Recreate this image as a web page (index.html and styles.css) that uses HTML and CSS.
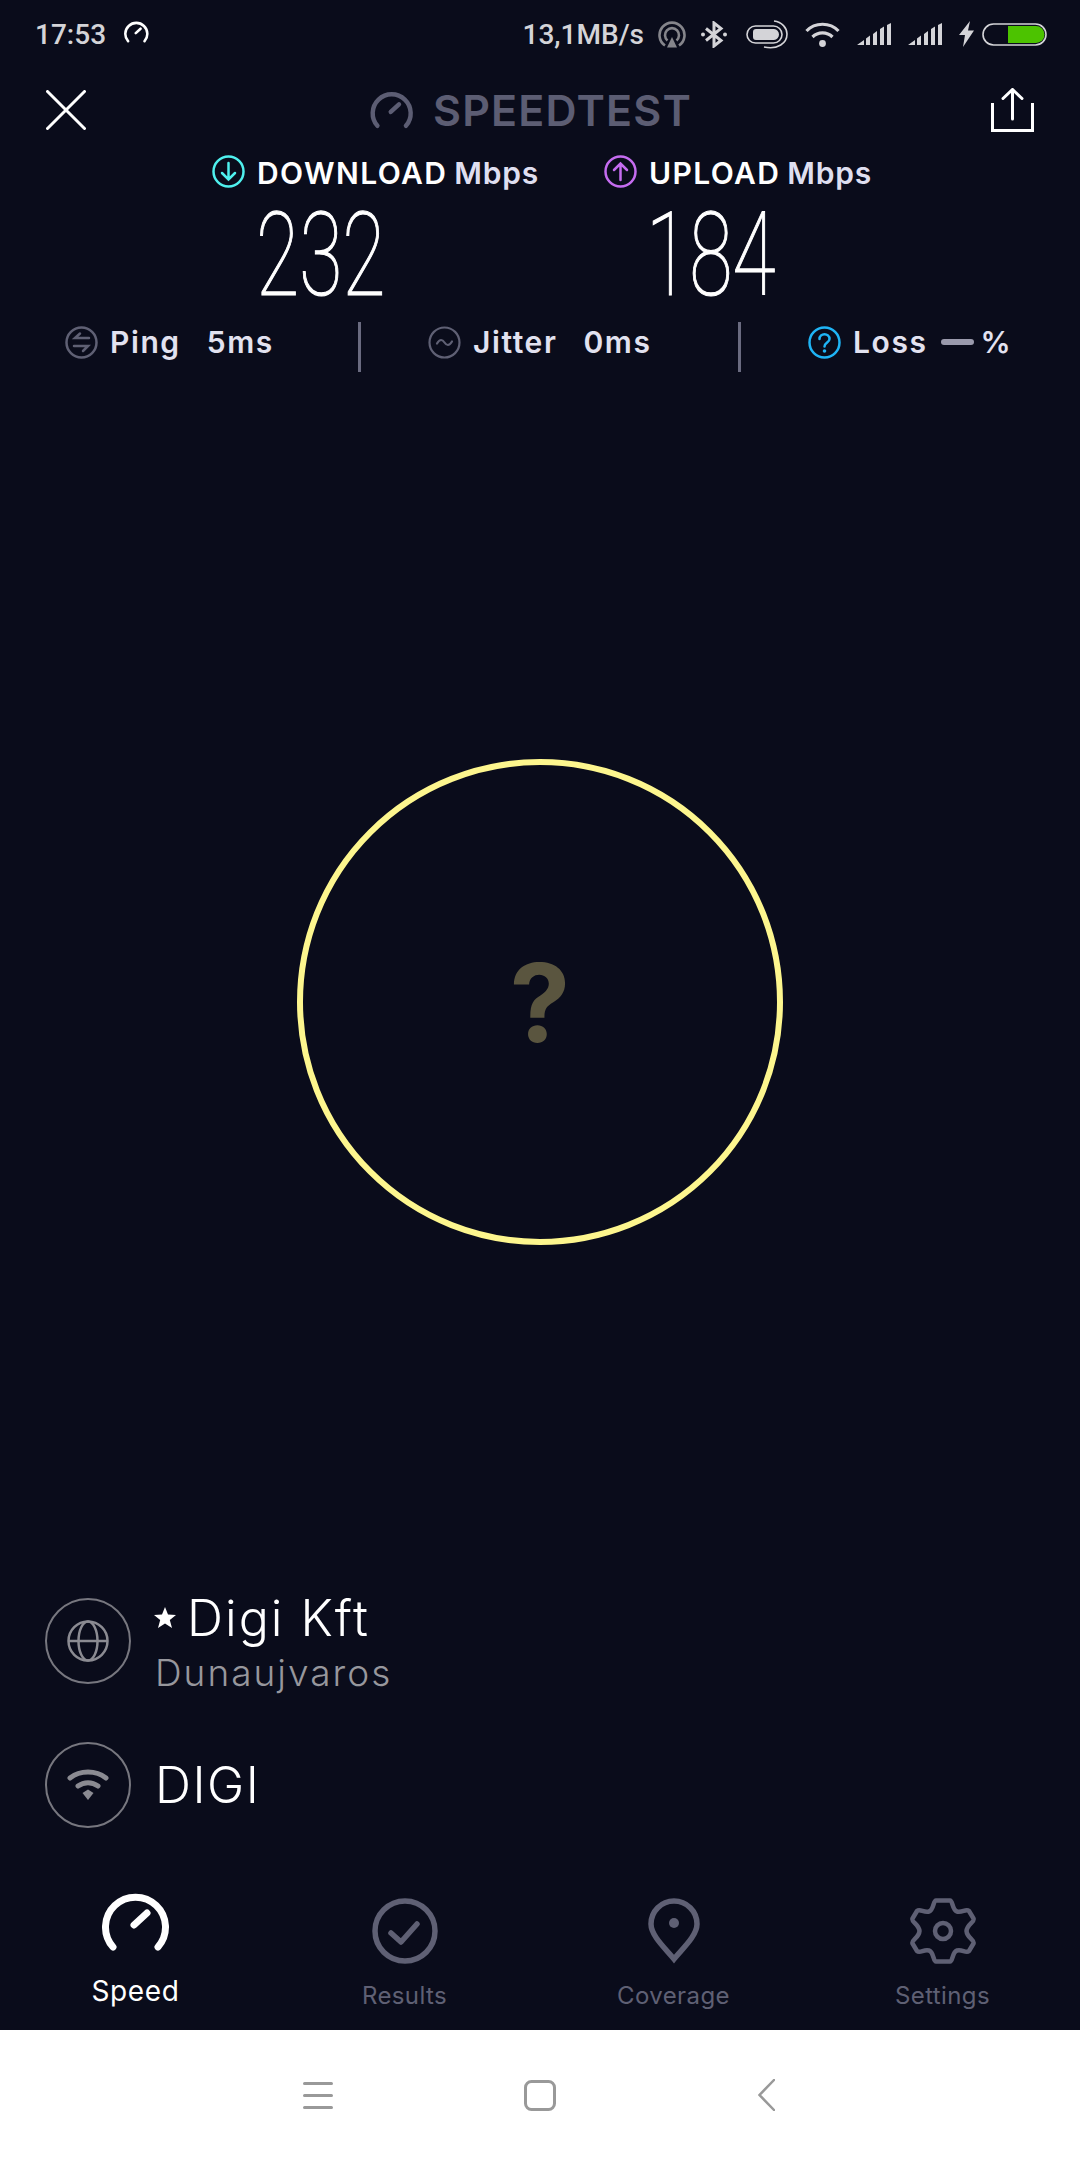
FILE: index.html
```html
<!DOCTYPE html>
<html lang="en">

<head>
  <meta name="viewport" content="width=device-width, initial-scale=1.0">
  <link rel="stylesheet" href="styles.css">
</head>

<body>
  <svg class="defs" width="0" height="0">
    <symbol id="gauge" viewBox="0 0 68 60">
      <path d="M11 55A30 30 0 1 1 56 55M32 33L45 21" fill="none" stroke="currentColor" stroke-width="7" stroke-linecap="round" />
    </symbol>
  </svg>

  <div class="screen">

    <!-- Status bar -->
    <div class="status-bar">
      <span class="clock">17:53</span>
      <svg class="status-gauge" width="25" height="22"><use href="#gauge" /></svg>
      <div class="status-right">
        <span class="net-speed">13,1MB/s</span>
        <svg width="28" height="27" viewBox="0 0 28 27" fill="none" stroke="#85858b" stroke-width="2.600">
          <path d="M7 24.500A12.500 12.500 0 1 1 21 24.500" />
          <path d="M9.500 19.500A7 7 0 1 1 18.500 19.500" />
          <path d="M14 16L19 26.500H9Z" fill="#85858b" stroke="none" />
        </svg>
        <svg class="status-bt" width="26" height="27" viewBox="0 0 26 27" fill="none" stroke="#d4d4d8" stroke-width="3">
          <path d="M5 7.500L20 19.500L13 25V2L20 7.500L5 19.500" />
          <circle cx="2" cy="13.500" r="2" fill="#d4d4d8" stroke="none" />
          <circle cx="24" cy="13.500" r="2" fill="#d4d4d8" stroke="none" />
        </svg>
        <svg width="42" height="29" viewBox="0 0 42 29" fill="none" stroke="#d4d4d8" stroke-width="1.600">
          <rect x="1" y="6" width="35" height="17" rx="8.500" />
          <path d="M7 12a3 3 0 0 1 3-3H28a5.500 5.500 0 0 1 5 5.500a5.500 5.500 0 0 1-5 5.500H10a3 3 0 0 1-3-3Z" fill="#d4d4d8" stroke="none" />
          <path d="M28 1C36 2 41 8 41 14C41 23 32 30 18 27" />
        </svg>
        <svg width="35" height="25" viewBox="0 0 35 25" fill="none" stroke="#d4d4d8" stroke-width="3.200">
          <path d="M1.500 9C10 0 25 0 33.500 9" />
          <path d="M7.500 15C13 9.500 22 9.500 27.500 15" />
          <circle cx="17.500" cy="21.500" r="3.400" fill="#d4d4d8" stroke="none" />
        </svg>
        <svg width="34" height="22" viewBox="0 0 34 22" fill="#d4d4d8">
          <path d="M0 22L7 17V22ZM9 15.500L13 12.500V22H9ZM16 11L20 8V22H16ZM23 6L27 3.500V22H23ZM30 2L34 0V22H30Z" />
        </svg>
        <svg width="34" height="22" viewBox="0 0 34 22" fill="#d4d4d8">
          <path d="M0 22L7 17V22ZM9 15.500L13 12.500V22H9ZM16 11L20 8V22H16ZM23 6L27 3.500V22H23ZM30 2L34 0V22H30Z" />
        </svg>
        <svg width="15" height="26" viewBox="0 0 15 26" fill="#d4d4d8">
          <path d="M11 0L0 14H6L4 26L15 9.500H9Z" />
        </svg>
        <svg class="battery" width="65" height="23" viewBox="0 0 65 23" fill="none">
          <rect x="1" y="1" width="63" height="21" rx="10.500" stroke="#d4d4d8" stroke-width="1.600" />
          <path d="M26 3H54a8.500 8.500 0 0 1 0 17H26Z" fill="#4cc300" />
        </svg>
      </div>
    </div>

    <!-- Header -->
    <div class="header">
      <svg class="close-icon" width="40" height="40" viewBox="0 0 40 40" fill="none" stroke="#fff" stroke-width="3" stroke-linecap="round">
        <path d="M1.500 1.500L38.500 38.500M38.500 1.500L1.500 38.500" />
      </svg>
      <div class="brand">
        <svg class="brand-gauge" width="44" height="38"><use href="#gauge" /></svg>
        <span>SPEEDTEST</span>
      </div>
      <svg class="share-icon" width="43" height="44" viewBox="0 0 43 44" fill="none" stroke="#fff" stroke-width="3">
        <path d="M1.500 15V42.500H41.500V15" />
        <path d="M21.500 31V2M12 10.500L21.500 1.500L31 10.500" stroke-linecap="round" />
      </svg>
    </div>

    <!-- Download / upload -->
    <div class="rates">
      <div class="rate-label">
        <svg width="33" height="33" viewBox="0 0 33 33" fill="none" stroke="#4ff0ee" stroke-width="2.500" stroke-linecap="round">
          <circle cx="16.500" cy="16.500" r="15" />
          <path d="M16.500 8V24M10 18L16.500 24.500L23 18" />
        </svg>
        <span>DOWNLOAD</span><span class="unit">Mbps</span>
      </div>
      <div class="rate-label">
        <svg width="33" height="33" viewBox="0 0 33 33" fill="none" stroke="#c56cf0" stroke-width="2.500" stroke-linecap="round">
          <circle cx="16.500" cy="16.500" r="15" />
          <path d="M16.500 25V9M10 15L16.500 8.500L23 15" />
        </svg>
        <span>UPLOAD</span><span class="unit">Mbps</span>
      </div>
    </div>
    <div class="rate-values">
      <span class="rate-value">232</span>
      <span class="rate-value">184</span>
    </div>

    <!-- Ping, jitter, loss -->
    <div class="stats">
      <div class="stat stat-first">
        <svg width="33" height="33" viewBox="0 0 33 33" fill="none" stroke="#5f6074" stroke-width="2.500" stroke-linecap="round">
          <circle cx="16.500" cy="16.500" r="15" />
          <path d="M24 12H10L15 7.500M9 20H23L18 25" />
        </svg>
        <span class="stat-label">Ping</span>
        <span>5ms</span>
      </div>
      <div class="stat-divider"></div>
      <div class="stat">
        <svg width="33" height="33" viewBox="0 0 33 33" fill="none" stroke="#5f6074" stroke-width="2.200" stroke-linecap="round">
          <circle cx="16.500" cy="16.500" r="15" />
          <path d="M9 17.500C12 12.500 14.500 13.500 16.500 16.500C18.500 19.500 21 20.500 24 15.500" />
        </svg>
        <span class="stat-label">Jitter</span>
        <span>0ms</span>
      </div>
      <div class="stat-divider"></div>
      <div class="stat">
        <svg width="33" height="33" viewBox="0 0 33 33" fill="none" stroke="#1fb4f5" stroke-width="2.500" stroke-linecap="round">
          <circle cx="16.500" cy="16.500" r="15" />
          <path d="M11.500 13C11.500 6.500 21.500 6.500 21.500 13C21.500 16.500 16.500 16.500 16.500 20.500" />
          <circle cx="16.500" cy="25" r="1.800" fill="#1fb4f5" stroke="none" />
        </svg>
        <span>Loss</span>
        <span class="dash"></span>
        <span class="percent">%</span>
      </div>
    </div>

    <!-- Result circle -->
    <div class="main">
      <div class="ring"><span>?</span></div>
    </div>

    <!-- Provider and network -->
    <div class="info">
      <div class="info-row">
        <div class="info-icon">
          <svg width="42" height="42" viewBox="0 0 42 42" fill="none" stroke="#8b8b92" stroke-width="2.500">
            <circle cx="21" cy="21" r="19.500" />
            <ellipse cx="21" cy="21" rx="9.500" ry="19.500" />
            <path d="M1.500 21H40.500" />
          </svg>
        </div>
        <div class="info-text">
          <div class="provider">
            <svg class="star" width="22" height="21" viewBox="0 0 22 21" fill="#fff">
              <path d="M11 0L14 7.500L22 8L15.800 13L18 21L11 16.500L4 21L6.200 13L0 8L8 7.500Z" />
            </svg>
            <span>Digi Kft</span>
          </div>
          <div class="city">Dunaujvaros</div>
        </div>
      </div>
      <div class="info-row">
        <div class="info-icon">
          <svg width="42" height="32" viewBox="0 0 42 32" fill="none" stroke="#8b8b92" stroke-width="5" stroke-linecap="round">
            <path d="M3 9C13 1 29 1 39 9" />
            <path d="M11 17C17 12.500 25 12.500 31 17" />
            <path d="M15.500 24L21 20.500L26.500 24L21 31Z" fill="#8b8b92" stroke="none" />
          </svg>
        </div>
        <div class="network">DIGI</div>
      </div>
    </div>

    <!-- Tabs -->
    <div class="tabs">
      <div class="tab tab-active">
        <svg width="68" height="60"><use href="#gauge" /></svg>
        <span>Speed</span>
      </div>
      <div class="tab">
        <svg width="66" height="66" viewBox="0 0 66 66" fill="none" stroke="currentColor" stroke-width="5.500" stroke-linecap="round" stroke-linejoin="round">
          <circle cx="33" cy="33" r="30" />
          <path d="M19 35L29 44L45 26" />
        </svg>
        <span>Results</span>
      </div>
      <div class="tab">
        <svg width="52" height="66" viewBox="0 0 52 66" fill="none" stroke="currentColor" stroke-width="5.500">
          <path d="M26 61C18 51 3 38 3 26A23 23 0 0 1 49 26C49 38 34 51 26 61Z" />
          <circle cx="26" cy="25" r="5" fill="currentColor" stroke="none" />
        </svg>
        <span>Coverage</span>
      </div>
      <div class="tab">
        <svg width="66" height="66" viewBox="0 0 66 66" fill="none" stroke="currentColor" stroke-width="4.500" stroke-linejoin="round">
          <path d="M26 2.500H40C43 2.500 42 12 47 13.500C52 15 56 10.500 59 13L63.500 20.500C65 24 57 26 56.500 33C57 40 65 42 63.500 45.500L59 53C56 55.500 52 51 47 52.500C42 54 43 63.500 40 63.500H26C23 63.500 24 54 19 52.500C14 51 10 55.500 7 53L2.500 45.500C1 42 9 40 9.500 33C9 26 1 24 2.500 20.500L7 13C10 10.500 14 15 19 13.500C24 12 23 2.500 26 2.500Z" />
          <circle cx="33" cy="33" r="8" />
        </svg>
        <span>Settings</span>
      </div>
    </div>

    <!-- Android nav -->
    <div class="nav-bar">
      <svg width="30" height="27" viewBox="0 0 30 27" fill="none" stroke="#999" stroke-width="3" stroke-linecap="round">
        <path d="M1.500 1.500H28.500M1.500 13.500H28.500M1.500 25.500H28.500" />
      </svg>
      <svg width="32" height="31" viewBox="0 0 32 31" fill="none" stroke="#999" stroke-width="3">
        <rect x="1.500" y="1.500" width="29" height="28" rx="6" />
      </svg>
      <svg class="nav-back" width="17" height="32" viewBox="0 0 17 32" fill="none" stroke="#999" stroke-width="2.500" stroke-linecap="round">
        <path d="M16 1L1.500 16L16 31" />
      </svg>
    </div>

  </div>
</body>

</html>
```

FILE: styles.css
```css
html,
body {
  margin: 0;
  padding: 0;
  background: #0a0c1b;
  font-family: Inter, "Noto Sans", sans-serif;
}

.defs {
  display: block;
  height: 0;
}

.screen {
  width: 1080px;
  height: 2160px;
  display: flex;
  flex-direction: column;
  overflow: hidden;
}

svg {
  display: block;
  flex: none;
}

/* Status bar */
.status-bar {
  height: 68px;
  display: flex;
  align-items: center;
  padding: 0 33px 0 35px;
  color: #d4d4d8;
  font-family: Roboto, sans-serif;
  font-size: 28px;
  font-weight: 500;
  box-sizing: border-box;
}

.status-gauge {
  margin-left: 18px;
  margin-top: -4px;
  color: #fff;
}

.status-right {
  margin-left: auto;
  display: flex;
  align-items: center;
  gap: 17px;
}

.net-speed {
  margin-right: -3px;
}

.status-bt {
  margin-left: -2px;
  margin-right: 2px;
}

.battery {
  margin-left: -9px;
}

/* Header */
.header {
  height: 84px;
  display: flex;
  align-items: center;
  justify-content: space-between;
  padding: 0 46px;
}

.brand {
  display: flex;
  align-items: center;
  gap: 19px;
  margin-right: 15px;
  color: #5c5d73;
  font-size: 43px;
  font-weight: 600;
  letter-spacing: 1.2px;
}

/* Rates */
.rates {
  height: 36px;
  display: grid;
  grid-template-columns: 392px auto;
  padding-left: 212px;
}

.rate-label {
  display: flex;
  align-items: center;
  gap: 12px;
  color: #fff;
  font-size: 30px;
  font-weight: 600;
  letter-spacing: 1.4px;
}

.rate-label span {
  margin-top: 3px;
}

.unit {
  margin-left: -5px;
  color: #dfdff0;
  letter-spacing: 0.8px;
}

.rate-values {
  height: 134px;
  display: grid;
  grid-template-columns: 390px auto;
  padding-left: 256px;
}

.rate-value {
  display: block;
  width: 202px;
  color: #fff;
  font-family: Roboto, sans-serif;
  font-size: 116px;
  font-weight: 100;
  line-height: 134px;
  -webkit-text-stroke: 1.2px #fff;
  transform: scaleX(0.68);
  transform-origin: left center;
}

/* Stats */
.stats {
  height: 50px;
  display: grid;
  grid-template-columns: 358px 3px 377px 3px 1fr;
}

.stat {
  display: flex;
  align-items: center;
  gap: 12px;
  height: 40px;
  padding-left: 67px;
  color: #e2e2f0;
  font-size: 30px;
  font-weight: 600;
  letter-spacing: 1.6px;
}

.stat-first {
  padding-left: 65px;
}

.stat-label {
  margin-right: 14px;
}

.stat-divider {
  background: #6a6b80;
}

.dash {
  width: 33px;
  height: 6px;
  margin-left: 1px;
  border-radius: 3px;
  background: #9a9aac;
}

.percent {
  margin-left: -5px;
}

/* Result circle */
.main {
  flex: 1;
  display: flex;
  align-items: center;
  justify-content: center;
  padding-top: 34px;
}

.ring {
  width: 486px;
  height: 486px;
  display: flex;
  align-items: center;
  justify-content: center;
  border: 6px solid #fdf68e;
  border-radius: 50%;
  box-sizing: border-box;
  color: #5a553f;
  font-size: 108px;
  font-weight: 700;
}

/* Provider info */
.info {
  height: 300px;
  display: flex;
  flex-direction: column;
  gap: 58px;
  padding-left: 45px;
  box-sizing: border-box;
}

.info-row {
  height: 86px;
  display: flex;
  align-items: center;
  gap: 24px;
  color: #fff;
}

.info-text {
  padding-top: 6px;
}

.info-icon {
  width: 86px;
  height: 86px;
  flex: none;
  display: flex;
  align-items: center;
  justify-content: center;
  border: 2px solid #77777f;
  border-radius: 50%;
  box-sizing: border-box;
}

.provider {
  display: flex;
  align-items: center;
  gap: 11px;
  font-size: 50px;
  font-weight: 300;
  line-height: 54px;
  letter-spacing: 2px;
}

.star {
  margin-left: -1px;
}

.city {
  margin-top: 3px;
  color: #97979d;
  font-size: 37px;
  font-weight: 300;
  line-height: 50px;
  letter-spacing: 2px;
}

.network {
  font-size: 50px;
  font-weight: 300;
  letter-spacing: 1.5px;
}

/* Tabs */
.tabs {
  height: 132px;
  display: grid;
  grid-template-columns: repeat(4, 269px);
  padding-left: 1px;
}

.tab {
  display: flex;
  flex-direction: column;
  align-items: center;
  gap: 17px;
  color: #5f6074;
  font-size: 24px;
  line-height: 30px;
  letter-spacing: 0.4px;
}

.tab-active {
  margin-top: -6px;
  gap: 24px;
  color: #fff;
  font-size: 28px;
  letter-spacing: 0.6px;
}

/* Android nav */
.nav-bar {
  height: 130px;
  display: flex;
  align-items: center;
  gap: 191px;
  padding-left: 303px;
  background: #fff;
}

.nav-back {
  margin-left: 11px;
}
```
